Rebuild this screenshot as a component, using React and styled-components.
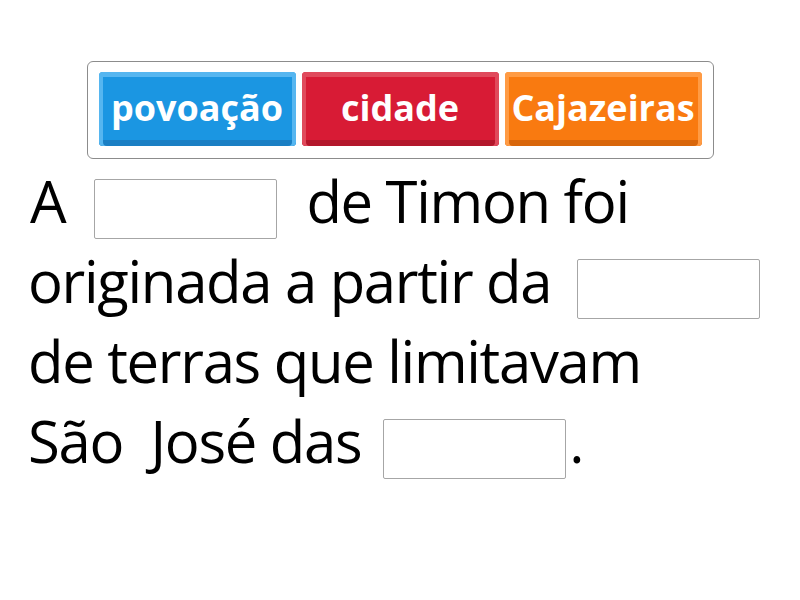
import React from "react";
import styled, { createGlobalStyle } from "styled-components";

const GlobalStyle = createGlobalStyle`
  html, body {
    margin: 0;
    padding: 0;
    background: #ffffff;
  }
  body {
    font-family: "Open Sans", "DejaVu Sans", sans-serif;
  }
`;

const Page = styled.div`
  width: 800px;
  height: 600px;
  box-sizing: border-box;
  padding-top: 61px;
  display: flex;
  flex-direction: column;
  align-items: center;
`;

const WordBank = styled.div`
  width: 627px;
  height: 98px;
  box-sizing: border-box;
  border: 1px solid #8c8c8c;
  border-radius: 6px;
  padding: 10px 11px;
  display: flex;
  gap: 6px;
`;

const palette = {
  blue: { top: "#56b6f0", main: "#1b96e2", bottom: "#1a7fc4" },
  red: { top: "#e04a5c", main: "#d81b35", bottom: "#b3172b" },
  orange: { top: "#ff9b44", main: "#f97a10", bottom: "#d8660b" },
};

const Tile = styled.div`
  flex: 1;
  height: 74px;
  box-sizing: border-box;
  border-radius: 4px;
  background: ${(p) => palette[p.$color].main};
  box-shadow: inset 0 5px 0 ${(p) => palette[p.$color].top},
    inset 4px 0 0 ${(p) => palette[p.$color].top},
    inset -4px 0 0 ${(p) => palette[p.$color].top},
    inset 0 -6px 0 ${(p) => palette[p.$color].bottom};
  display: flex;
  align-items: center;
  justify-content: center;
  padding-bottom: 4px;
  color: #ffffff;
  font-family: "Open Sans", sans-serif;
  font-weight: 700;
  font-size: 36px;
`;

const Sentence = styled.div`
  width: 800px;
  box-sizing: border-box;
  padding: 20px 0 0 28px;
  display: flex;
  flex-direction: column;
  gap: 20px;
  color: #000000;
  font-family: "Open Sans", sans-serif;
  font-size: 58px;
  letter-spacing: -1.3px;
`;

const Line = styled.div`
  height: 60px;
  display: flex;
  align-items: center;
  gap: ${(p) => p.$gap || 29}px;
  white-space: nowrap;
`;

const Word = styled.span`
  line-height: 60px;
  margin-bottom: 16px;
  margin-left: ${(p) => p.$ml || 0}px;
`;

const Blank = styled.div`
  width: 183px;
  height: 60px;
  box-sizing: border-box;
  border: 1px solid #a6a6a6;
  border-radius: 2px;
  background: #ffffff;
`;

export default function App() {
  return (
    <>
      <GlobalStyle />
      <Page>
        <WordBank>
          <Tile $color="blue">povoação</Tile>
          <Tile $color="red">cidade</Tile>
          <Tile $color="orange">Cajazeiras</Tile>
        </WordBank>
        <Sentence>
          <Line>
            <Word $ml={2}>A</Word>
            <Blank />
            <Word>de Timon foi</Word>
          </Line>
          <Line $gap={26}>
            <Word>originada a partir da</Word>
            <Blank />
          </Line>
          <Line>
            <Word>de terras que limitavam</Word>
          </Line>
          <Line $gap={22}>
            <Word>São &nbsp;José das</Word>
            <Blank />
            <Word $ml={-19}>.</Word>
          </Line>
        </Sentence>
      </Page>
    </>
  );
}
